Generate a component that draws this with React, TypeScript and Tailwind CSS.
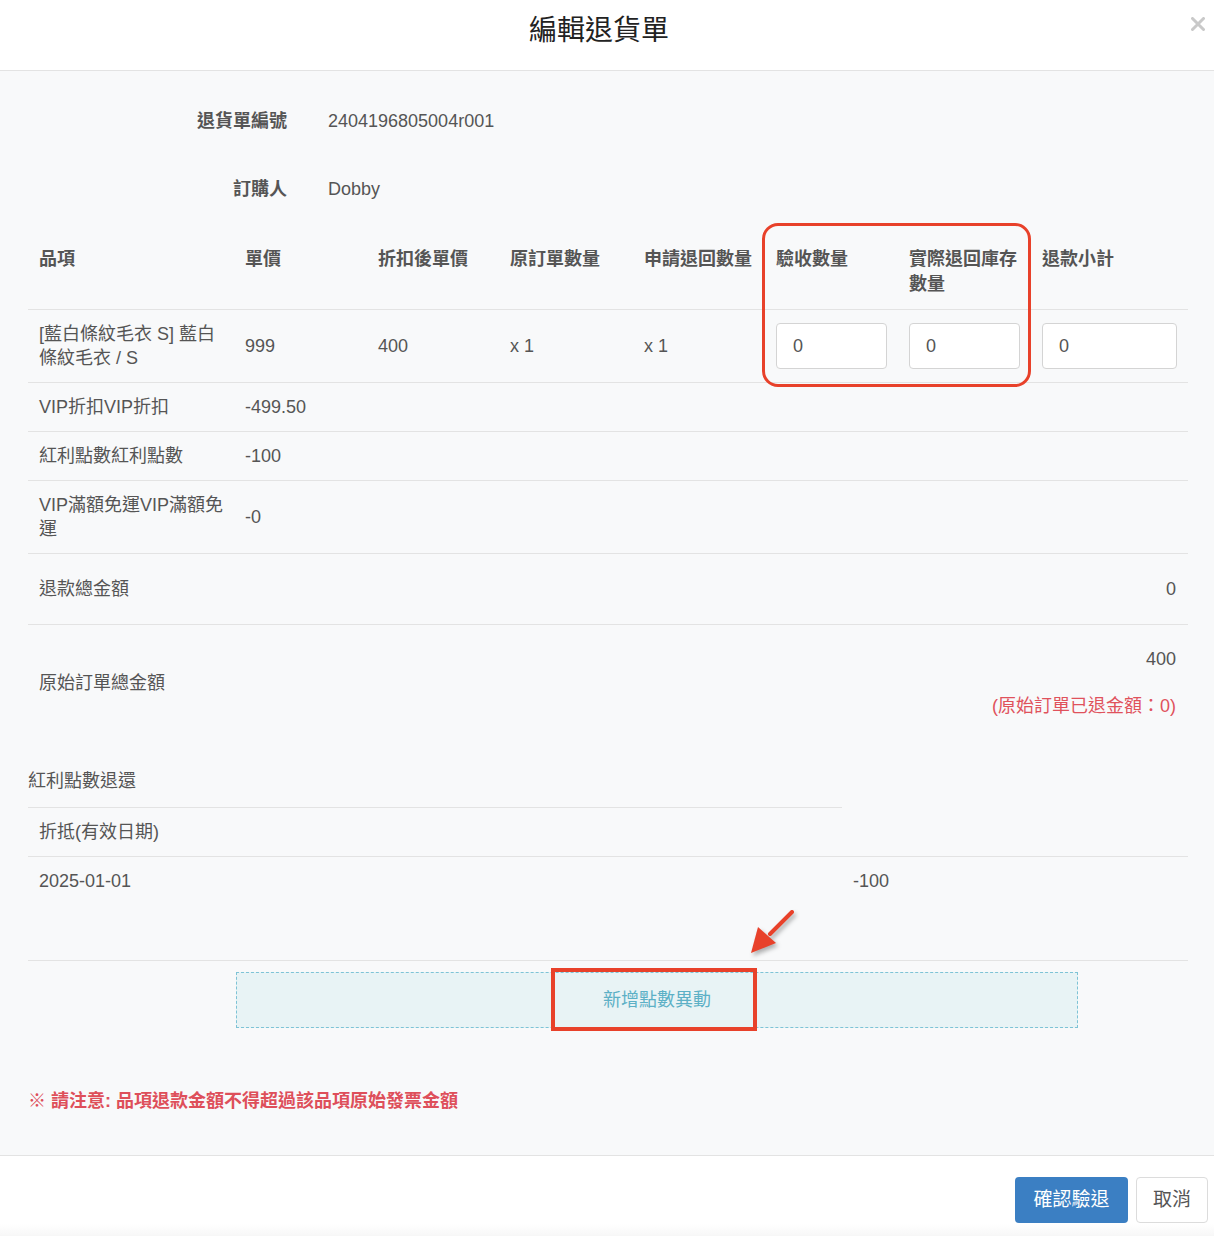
const cols = "grid grid-cols-[206px_133px_132px_134px_132px_133px_133px_157px] items-center";

const headers = ["品項", "單價", "折扣後單價", "原訂單數量", "申請退回數量", "驗收數量", "實際退回庫存數量", "退款小計"];

const adjustments = [
  { name: "VIP折扣VIP折扣", value: "-499.50" },
  { name: "紅利點數紅利點數", value: "-100" },
  { name: "VIP滿額免運VIP滿額免運", value: "-0" },
];

const QtyInput = () => (
  <div className="h-[46px] w-full rounded-[4px] border border-[#d4d4d4] bg-white pl-[16px] flex items-center text-[#555]">0</div>
);

export default function App() {
  return (
    <div className="relative w-[1214px] min-h-[1236px] bg-white font-['Liberation_Sans','Noto_Sans_CJK_TC',sans-serif] text-[18px] text-[#555]">
      {/* Header */}
      <div className="relative h-[71px] border-b border-[#e3e3e3] flex justify-center pt-[13px] pr-[16px]">
        <h1 className="text-[28px] leading-[36px] text-[#222]">編輯退貨單</h1>
        <svg className="absolute right-[9px] top-[17px]" width="14" height="14" viewBox="0 0 14 14">
          <path d="M1.5 1.5 L12.5 12.5 M12.5 1.5 L1.5 12.5" stroke="#c9c9c9" strokeWidth="3" strokeLinecap="round" />
        </svg>
      </div>

      {/* Body */}
      <div className="bg-[#f8f9fa] pl-[28px] pr-[26px] pt-[16px] pb-[42px] border-b border-[#e3e3e3]">
        <div className="grid grid-cols-[259px_1fr] gap-x-[41px]">
          <div className="h-[68px] flex items-center justify-end font-bold">退貨單編號</div>
          <div className="h-[68px] flex items-center">2404196805004r001</div>
          <div className="h-[68px] flex items-center justify-end font-bold">訂購人</div>
          <div className="h-[68px] flex items-center">Dobby</div>
        </div>

        {/* Items table */}
        <div className="mt-[12px] leading-[24px]">
          <div className={`${cols} items-start border-b border-[#e3e3e3]`}>
            {headers.map((h) => (
              <div key={h} className="px-[11px] py-[12px] leading-[25px] font-bold">{h}</div>
            ))}
          </div>
          <div className={`${cols} border-b border-[#e3e3e3]`}>
            <div className="pl-[11px] pr-[6px] py-[12px]">[藍白條紋毛衣 S] 藍白條紋毛衣 / S</div>
            <div className="px-[11px] py-[12px]">999</div>
            <div className="px-[11px] py-[12px]">400</div>
            <div className="px-[11px] py-[12px]">x 1</div>
            <div className="px-[11px] py-[12px]">x 1</div>
            <div className="px-[11px] py-[12px]"><QtyInput /></div>
            <div className="px-[11px] py-[12px]"><QtyInput /></div>
            <div className="px-[11px] py-[12px]"><QtyInput /></div>
          </div>
          {adjustments.map((a) => (
            <div key={a.name} className={`${cols} border-b border-[#e3e3e3]`}>
              <div className="pl-[11px] pr-[4px] py-[12px] break-all">{a.name}</div>
              <div className="px-[11px] py-[12px]">{a.value}</div>
            </div>
          ))}
          <div className="flex justify-between px-[11px] pr-[12px] py-[23px] border-b border-[#e3e3e3]">
            <span>退款總金額</span>
            <span>0</span>
          </div>
          <div className="flex items-center justify-between px-[11px] pr-[12px] pt-[22px] pb-[22px]">
            <span>原始訂單總金額</span>
            <div className="text-right">
              <div>400</div>
              <div className="mt-[23px] text-[#e0525c]">(原始訂單已退金額：0)</div>
            </div>
          </div>
        </div>

        {/* Bonus points */}
        <div className="mt-[29px] leading-[24px]">
          <div className="w-[814px] pb-[14px] border-b border-[#e3e3e3]">紅利點數退還</div>
          <div className="grid grid-cols-[814px_1fr] border-b border-[#e3e3e3]">
            <div className="px-[11px] py-[12px]">折抵(有效日期)</div>
            <div />
          </div>
          <div className="grid grid-cols-[814px_1fr] pb-[55px] border-b border-[#e3e3e3]">
            <div className="px-[11px] py-[12px]">2025-01-01</div>
            <div className="px-[11px] py-[12px]">-100</div>
          </div>
        </div>

        <div className="mt-[11px] ml-[208px] w-[842px] h-[56px] flex items-center justify-center border border-dashed border-[#7ec3d6] bg-[#e8f3f5] text-[#5cb0c6]">
          新增點數異動
        </div>

        <p className="mt-[61px] leading-[24px] font-bold text-[#de4f5a]">※ 請注意: 品項退款金額不得超過該品項原始發票金額</p>
      </div>

      {/* Footer */}
      <div className="flex justify-end gap-[8px] pt-[21px] pr-[6px] pb-[13px] bg-gradient-to-b from-white from-85% to-[#f7f7f7]">
        <button className="h-[46px] w-[113px] rounded-[4px] bg-[#3b7fc3] text-white text-[19px]">確認驗退</button>
        <button className="h-[46px] w-[72px] rounded-[4px] border border-[#dcdcdc] bg-white text-[#555] text-[19px]">取消</button>
      </div>

      {/* Annotations */}
      <div className="absolute left-[762px] top-[223px] w-[269px] h-[164px] rounded-[16px] border-[3px] border-[#e8412a]" />
      <div className="absolute left-[551px] top-[968px] w-[206px] h-[63px] border-[4px] border-[#e8412a]" />
      <svg className="absolute left-[740px] top-[905px] drop-shadow-[2px_3px_2px_rgba(0,0,0,0.3)]" width="60" height="55" viewBox="0 0 60 55">
        <path d="M52 7 L30 29" stroke="#e8412a" strokeWidth="4" strokeLinecap="round" />
        <polygon points="11,48 18,22 36,38" fill="#e8412a" />
      </svg>
    </div>
  );
}
